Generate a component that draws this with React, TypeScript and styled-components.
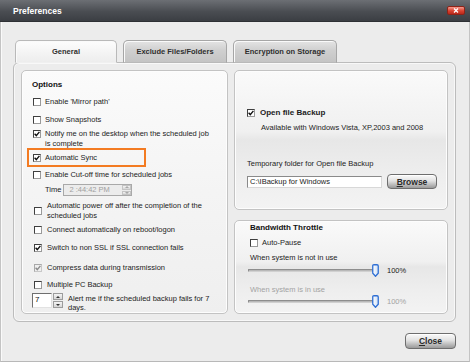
import React from 'react';
import styled, { createGlobalStyle } from 'styled-components';

const GlobalStyle = createGlobalStyle`
  html, body {
    margin: 0;
    padding: 0;
    background: #ececec;
  }
  body {
    font-family: "Liberation Sans", Arial, sans-serif;
  }
`;

const Window = styled.div`
  width: 470px;
  height: 362px;
  display: flex;
  flex-direction: column;
  background: #ececec;
  overflow: hidden;
`;

const TitleBar = styled.div`
  height: 21px;
  flex: none;
  display: flex;
  align-items: center;
  justify-content: space-between;
  padding: 0 5px 0 13px;
  background: linear-gradient(#6c6f74, #4a4d52 55%, #3b3e43);
  border-bottom: 1px solid #2e3034;
  color: #fff;
  font-size: 8.5px;
  font-weight: bold;
`;

const WinClose = styled.div`
  width: 18px;
  height: 9px;
  border-radius: 2px;
  background: linear-gradient(#f59a8e, #d9412f 55%, #b92a1c);
  border: 1px solid #8e2318;
  display: flex;
  align-items: center;
  justify-content: center;
  box-sizing: border-box;
`;

const Body = styled.div`
  flex: 1;
  display: flex;
  flex-direction: column;
  padding: 18px 13px 0 12px;
  border-left: 1px solid #c4c4c4;
  border-right: 1px solid #c4c4c4;
  border-bottom: 1px solid #b8b8b8;
  box-shadow: inset 1px 0 0 #fafafa;
`;

const TabRow = styled.div`
  display: flex;
  gap: 6px;
  padding-left: 2px;
  margin-bottom: -1px;
  position: relative;
  z-index: 1;
`;

const Tab = styled.div<{ $w: number; $active?: boolean }>`
  width: ${p => p.$w}px;
  height: 23px;
  box-sizing: border-box;
  display: flex;
  align-items: center;
  justify-content: center;
  border: 1px solid ${p => (p.$active ? '#b9b9b9' : '#a6a6a6')};
  border-bottom: ${p => (p.$active ? '1px solid #f0f0f0' : '1px solid #b9b9b9')};
  border-radius: 5px 5px 0 0;
  background: ${p =>
    p.$active
      ? 'linear-gradient(#fdfdfd, #f3f3f3 60%, #ededed)'
      : 'linear-gradient(#e4e4e4, #cfcfcf 45%, #c4c4c4)'};
  box-shadow: inset 1px 1px 0 #fafafa;
  font-size: 7.5px;
  font-weight: bold;
  color: #2e2e2e;
`;

const Panel = styled.div`
  height: 260px;
  box-sizing: border-box;
  border: 1px solid #bcbcbc;
  border-radius: 6px;
  box-shadow: inset 0 0 0 1px #f8f8f8;
  padding: 7px;
  display: grid;
  grid-template-columns: 207px 214px;
  gap: 6px;
`;

const GroupBox = styled.div<{ $pad: string }>`
  box-sizing: border-box;
  border: 1px solid #c3c3c3;
  border-radius: 5px;
  padding: ${p => p.$pad};
  background: linear-gradient(#fbfbfb, #f4f4f4 50%, #efefef);
  box-shadow: inset 0 0 0 1px #fdfdfd;
`;

const GlossBox = styled(GroupBox)<{ $h: number }>`
  height: ${p => p.$h}px;
  background: linear-gradient(#fafafa 0%, #f0f0f0 44%, #e7e7e7 50%, #eeeeee 75%, #f3f3f3 100%);
`;

const RightCol = styled.div`
  display: flex;
  flex-direction: column;
  gap: 10px;
`;

const Heading = styled.div<{ $mt?: number; $ml?: number }>`
  font-size: 8px;
  font-weight: bold;
  line-height: 10px;
  color: #111;
  margin-top: ${p => p.$mt ?? 0}px;
  margin-left: ${p => p.$ml ?? 0}px;
`;

const Row = styled.div<{ $mt?: number; $ml?: number; $center?: boolean; $gap?: number }>`
  display: flex;
  align-items: ${p => (p.$center ? 'center' : 'flex-start')};
  gap: ${p => p.$gap ?? 4}px;
  margin-top: ${p => p.$mt ?? 0}px;
  margin-left: ${p => p.$ml ?? 0}px;
  font-size: 7.5px;
  line-height: 10px;
  color: #1c1c1c;
`;

const HighlightRow = styled(Row)`
  width: 119px;
  box-sizing: border-box;
  margin-left: -6px;
  padding: 3px 0 2px 4px;
  border: 2px solid #f37b22;
`;

const Text = styled.span<{ $dim?: boolean; $bold?: boolean; $lh?: number }>`
  color: ${p => (p.$dim ? '#a3a3a3' : '#1c1c1c')};
  font-weight: ${p => (p.$bold ? 'bold' : 'normal')};
  font-size: ${p => (p.$bold ? '8px' : '7.5px')};
  line-height: ${p => p.$lh ?? 10}px;
  white-space: nowrap;
`;

const Box = styled.span<{ $disabled?: boolean; $top?: number }>`
  flex: none;
  width: 8px;
  height: 8px;
  box-sizing: border-box;
  margin-top: ${p => p.$top ?? 1}px;
  background: ${p => (p.$disabled ? '#efefef' : '#fff')};
  border: 1px solid ${p => (p.$disabled ? '#a8a8a8' : '#3f3f3f')};
  border-right-color: ${p => (p.$disabled ? '#c8c8c8' : '#9a9a9a')};
  border-bottom-color: ${p => (p.$disabled ? '#c8c8c8' : '#9a9a9a')};
  display: flex;
  align-items: center;
  justify-content: center;
`;

const Check: React.FC<{ checked?: boolean; disabled?: boolean; top?: number }> = ({ checked, disabled, top }) => (
  <Box $disabled={disabled} $top={top}>
    {checked && (
      <svg width="6" height="6" viewBox="0 0 6 6">
        <path d="M0.6 2.8 L2.3 4.6 L5.4 0.9" fill="none" stroke={disabled ? '#8c8c8c' : '#111'} strokeWidth="1.4" />
      </svg>
    )}
  </Box>
);

const TimeField = styled.div`
  width: 69px;
  height: 12px;
  box-sizing: border-box;
  border: 1px solid #a9a9a9;
  background: #ececec;
  display: flex;
  align-items: center;
  justify-content: space-between;
  padding-left: 5px;
  color: #a0a0a0;
  font-size: 7.5px;
`;

const SpinCol = styled.div<{ $w: number; $h: number }>`
  width: ${p => p.$w}px;
  height: ${p => p.$h}px;
  display: flex;
  flex-direction: column;
  gap: 1px;
  flex: none;
`;

const SpinBtn = styled.div<{ $disabled?: boolean }>`
  flex: 1;
  background: linear-gradient(#f4f4f4, #d6d6d6);
  border: 1px solid ${p => (p.$disabled ? '#c4c4c4' : '#9c9c9c')};
  box-sizing: border-box;
  display: flex;
  align-items: center;
  justify-content: center;
`;

const Arrow: React.FC<{ up?: boolean; color?: string }> = ({ up, color = '#333' }) => (
  <svg width="4" height="2" viewBox="0 0 4 2">
    <path d={up ? 'M0 2 L2 0 L4 2 Z' : 'M0 0 L4 0 L2 2 Z'} fill={color} />
  </svg>
);

const NumberField = styled.div`
  width: 20px;
  height: 15px;
  box-sizing: border-box;
  background: #fff;
  border: 1px solid #e2e2e2;
  border-top-color: #6f6f6f;
  border-left-color: #6f6f6f;
  font-size: 8px;
  line-height: 11px;
  padding-left: 2px;
  color: #111;
`;

const PathField = styled.div`
  width: 135px;
  height: 12px;
  box-sizing: border-box;
  background: #fff;
  border: 1px solid #8a8a8a;
  border-right-color: #d8d8d8;
  border-bottom-color: #d8d8d8;
  font-size: 7.5px;
  line-height: 10px;
  padding-left: 2px;
  color: #1c1c1c;
`;

const PushButton = styled.div<{ $w: number; $h: number }>`
  width: ${p => p.$w}px;
  height: ${p => p.$h}px;
  box-sizing: border-box;
  border: 1px solid #6e6e6e;
  border-radius: 4px;
  background: linear-gradient(#fafafa, #e2e2e2 45%, #b4b4b4 80%, #9a9a9a);
  box-shadow: inset 0 1px 0 #fff;
  display: flex;
  align-items: center;
  justify-content: center;
  font-size: 8.5px;
  font-weight: bold;
  color: #2a2a2a;
  flex: none;

  u {
    text-decoration: underline;
  }
`;

const SliderRow = styled.div<{ $mt: number }>`
  display: flex;
  align-items: center;
  margin-top: ${p => p.$mt}px;
  margin-left: -2px;
  height: 13px;
`;

const Track = styled.div`
  width: 125px;
  height: 3px;
  box-sizing: border-box;
  border: 1px solid #8d8d8d;
  border-bottom-color: #d0d0d0;
  background: #b8b8b8;
  border-radius: 1px;
`;

const Thumb = styled.svg`
  margin-left: -1px;
  flex: none;
`;

const Percent = styled.span<{ $dim?: boolean }>`
  margin-left: 8px;
  font-size: 7.5px;
  color: ${p => (p.$dim ? '#a3a3a3' : '#1c1c1c')};
`;

const Footer = styled.div`
  display: flex;
  justify-content: flex-end;
  margin-top: 11px;
`;

const Slider: React.FC<{ mt: number; dim?: boolean }> = ({ mt, dim }) => (
  <SliderRow $mt={mt}>
    <Track />
    <Thumb width="7" height="13" viewBox="0 0 7 13">
      <defs>
        <linearGradient id="thumbFill" x1="0" x2="1" y1="0" y2="0">
          <stop offset="0" stopColor="#ffffff" />
          <stop offset="1" stopColor="#cfe0f6" />
        </linearGradient>
      </defs>
      <path
        d="M0.75 2 Q0.75 0.75 2 0.75 H5 Q6.25 0.75 6.25 2 V9.2 L3.5 12.3 L0.75 9.2 Z"
        fill="url(#thumbFill)"
        stroke="#2f6fd4"
        strokeWidth="1.3"
      />
    </Thumb>
    <Percent $dim={dim}>100%</Percent>
  </SliderRow>
);

export default function App() {
  return (
    <Window>
      <GlobalStyle />
      <TitleBar>
        <span>Preferences</span>
        <WinClose>
          <svg width="6" height="5" viewBox="0 0 6 5">
            <path d="M1 0.5 L5 4.5 M5 0.5 L1 4.5" stroke="#fff" strokeWidth="1.3" />
          </svg>
        </WinClose>
      </TitleBar>
      <Body>
        <TabRow>
          <Tab $w={102} $active>General</Tab>
          <Tab $w={104}>Exclude Files/Folders</Tab>
          <Tab $w={104}>Encryption on Storage</Tab>
        </TabRow>
        <Panel>
          <GroupBox $pad="9px 0 0 11px">
            <Heading $ml={-1}>Options</Heading>
            <Row $mt={7}>
              <Check />
              <Text>Enable 'Mirror path'</Text>
            </Row>
            <Row $mt={8}>
              <Check />
              <Text>Show Snapshots</Text>
            </Row>
            <Row $mt={4}>
              <Check checked />
              <Text>
                Notify me on the desktop when the scheduled job
                <br />
                is complete
              </Text>
            </Row>
            <HighlightRow $mt={-1}>
              <Check checked />
              <Text>Automatic Sync</Text>
            </HighlightRow>
            <Row $mt={3}>
              <Check />
              <Text>Enable Cut-off time for scheduled jobs</Text>
            </Row>
            <Row $mt={4} $ml={12} $center $gap={2}>
              <Text>Time</Text>
              <TimeField>
                <span>2 :44:42 PM</span>
                <SpinCol $w={9} $h={10}>
                  <SpinBtn $disabled>
                    <Arrow up color="#a8a8a8" />
                  </SpinBtn>
                  <SpinBtn $disabled>
                    <Arrow color="#a8a8a8" />
                  </SpinBtn>
                </SpinCol>
              </TimeField>
            </Row>
            <Row $mt={5} $ml={1} $center $gap={5}>
              <Check top={0} />
              <Text>
                Automatic power off after the completion of the
                <br />
                scheduled jobs
              </Text>
            </Row>
            <Row $mt={4} $ml={1} $gap={5}>
              <Check />
              <Text>Connect automatically on reboot/logon</Text>
            </Row>
            <Row $mt={8} $ml={1} $gap={5}>
              <Check checked />
              <Text>Switch to non SSL if SSL connection fails</Text>
            </Row>
            <Row $mt={10} $ml={1} $gap={5}>
              <Check checked disabled />
              <Text>Compress data during transmission</Text>
            </Row>
            <Row $mt={7} $ml={1} $gap={5}>
              <Check />
              <Text>Multiple PC Backup</Text>
            </Row>
            <Row $mt={3} $ml={-1} $gap={1}>
              <NumberField>7</NumberField>
              <SpinCol $w={10} $h={15}>
                <SpinBtn>
                  <Arrow up />
                </SpinBtn>
                <SpinBtn>
                  <Arrow />
                </SpinBtn>
              </SpinCol>
              <Text $lh={9} style={{ marginLeft: 4, paddingTop: 1 }}>
                Alert me if the scheduled backup fails for 7
                <br />
                days.
              </Text>
            </Row>
          </GroupBox>
          <RightCol>
            <GlossBox $h={140} $pad="37px 0 0 12px">
              <Row $gap={5}>
                <Check checked />
                <Text $bold>Open file Backup</Text>
              </Row>
              <Row $mt={5} $ml={14}>
                <Text>Available with Windows Vista, XP,2003 and 2008</Text>
              </Row>
              <Row $mt={26}>
                <Text>Temporary folder for Open file Backup</Text>
              </Row>
              <Row $mt={5} $center $gap={5}>
                <PathField>C:\IBackup for Windows</PathField>
                <PushButton $w={50} $h={15}>
                  <span>
                    <u>B</u>rowse
                  </span>
                </PushButton>
              </Row>
            </GlossBox>
            <GlossBox $h={94} $pad="2px 0 0 15px">
              <Heading>Bandwidth Throttle</Heading>
              <Row $mt={5}>
                <Check />
                <Text>Auto-Pause</Text>
              </Row>
              <Row $mt={5}>
                <Text>When system is not in use</Text>
              </Row>
              <Slider mt={1} />
              <Row $mt={8}>
                <Text $dim>When system is in use</Text>
              </Row>
              <Slider mt={0} dim />
            </GlossBox>
          </RightCol>
        </Panel>
        <Footer>
          <PushButton $w={51} $h={16}>
            <span>
              <u>C</u>lose
            </span>
          </PushButton>
        </Footer>
      </Body>
    </Window>
  );
}
